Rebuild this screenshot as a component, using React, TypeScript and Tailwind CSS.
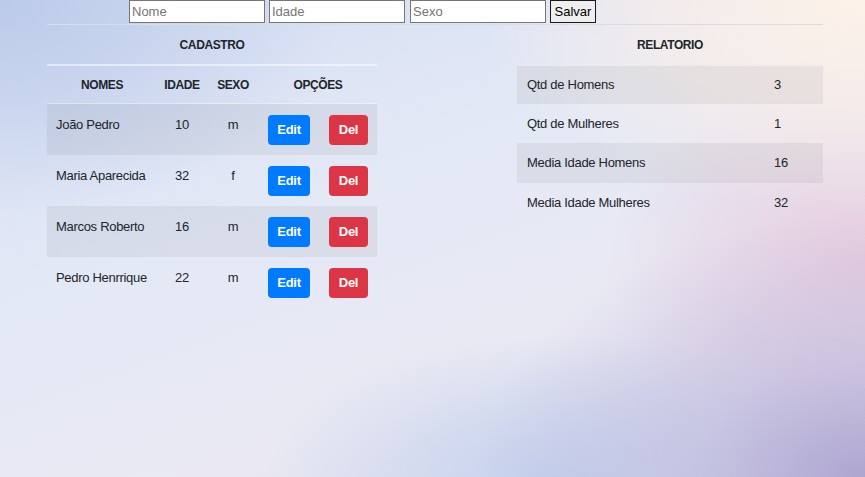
const pessoas = [
  { nome: 'João Pedro', idade: 10, sexo: 'm' },
  { nome: 'Maria Aparecida', idade: 32, sexo: 'f' },
  { nome: 'Marcos Roberto', idade: 16, sexo: 'm' },
  { nome: 'Pedro Henrrique', idade: 22, sexo: 'm' },
]

const relatorio = [
  { label: 'Qtd de Homens', valor: 3 },
  { label: 'Qtd de Mulheres', valor: 1 },
  { label: 'Media Idade Homens', valor: 16 },
  { label: 'Media Idade Mulheres', valor: 32 },
]

export default function App() {
  return (
    <div className="relative h-[477px] w-full overflow-hidden font-['Liberation_Sans',Arial,sans-serif] text-[#212529] bg-[radial-gradient(ellipse_45%_55%_at_100%_100%,#aea5d0_0%,rgba(190,185,220,0.6)_45%,transparent_100%),radial-gradient(ellipse_45%_45%_at_100%_0%,#fdf2e8_0%,rgba(250,238,232,0.7)_50%,transparent_100%),radial-gradient(ellipse_30%_40%_at_100%_55%,rgba(230,198,218,0.85)_0%,transparent_100%),radial-gradient(ellipse_40%_45%_at_0%_0%,#bccbea_0%,transparent_100%),radial-gradient(ellipse_35%_30%_at_65%_100%,#c3d1ed_0%,transparent_100%),linear-gradient(160deg,#d3ddf2_0%,#e4e9f6_40%,#eae9f3_70%,#e0dcec_100%)]">
      <div className="flex gap-[4px] pl-[129px]">
        <input placeholder="Nome" className="h-[23px] w-[136px] border border-[#767676] bg-white px-[2px] text-[13px] placeholder:text-[#757575]" />
        <input placeholder="Idade" className="h-[23px] w-[136px] border border-[#767676] bg-white px-[2px] text-[13px] placeholder:text-[#757575]" />
        <input placeholder="Sexo" className="ml-[1px] h-[23px] w-[136px] border border-[#767676] bg-white px-[2px] text-[13px] placeholder:text-[#757575]" />
        <button className="h-[23px] w-[46px] border border-[#1a1a1a] bg-[#efefef] text-[13px] text-black">Salvar</button>
      </div>

      <div className="ml-[47px] mr-[42px] mt-[1px] flex justify-between border-t border-[#d9dde8]">
        <div className="w-[330px]">
          <div className="flex h-[39px] items-center justify-center text-[12px] font-bold tracking-[-0.4px]">CADASTRO</div>
          <div className="border-t-[2px] border-[rgba(255,255,255,0.5)]" />
          <div className="flex h-[38px] items-center border-b border-[rgba(255,255,255,0.35)] text-[12px] font-bold tracking-[-0.4px]">
            <div className="w-[110px] text-center">NOMES</div>
            <div className="w-[50px] text-center">IDADE</div>
            <div className="w-[52px] text-center">SEXO</div>
            <div className="w-[118px] text-center">OPÇÕES</div>
          </div>
          {pessoas.map((p, i) => (
            <div key={p.nome} className={`flex h-[51px] items-start text-[13px] tracking-[-0.3px] ${i % 2 === 0 ? 'bg-[rgba(0,0,0,0.05)]' : ''}`}>
              <div className="w-[110px] pl-[9px] pt-[11px]">{p.nome}</div>
              <div className="w-[50px] pt-[11px] text-center">{p.idade}</div>
              <div className="w-[52px] pt-[11px] text-center">{p.sexo}</div>
              <div className="flex w-[118px] gap-[19px] pl-[9px] pt-[11px]">
                <button className="h-[30px] w-[42px] rounded-[4px] bg-[#007bff] text-[13px] font-bold tracking-[-0.3px] text-white">Edit</button>
                <button className="h-[30px] w-[39px] rounded-[4px] bg-[#dc3545] text-[13px] font-bold tracking-[-0.3px] text-white">Del</button>
              </div>
            </div>
          ))}
        </div>

        <div className="w-[306px]">
          <div className="flex h-[39px] items-center justify-center text-[12px] font-bold tracking-[-0.4px]">RELATORIO</div>
          {relatorio.map((r, i) => (
            <div key={r.label} className={`flex items-center text-[13px] tracking-[-0.3px] ${i % 2 === 0 ? 'h-[40px] bg-[rgba(0,0,0,0.05)]' : 'h-[39px]'} ${i === 0 ? 'border-t-[2px] border-[rgba(255,255,255,0.4)]' : ''}`}>
              <div className="w-[257px] pl-[10px]">{r.label}</div>
              <div>{r.valor}</div>
            </div>
          ))}
        </div>
      </div>
    </div>
  )
}
